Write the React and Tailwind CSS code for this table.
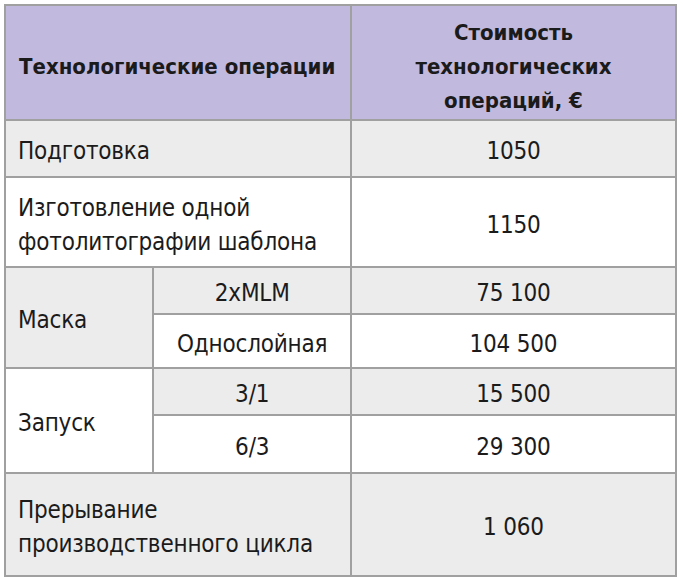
import React from 'react';

const font = { fontFamily: '"Liberation Sans Narrow", "DejaVu Sans Condensed", "Roboto Condensed", "Liberation Sans", sans-serif' };

const cell = 'border-2 border-[#a0a0a0] align-middle pt-[5px]';

const App = () => {
  return (
    <div className="w-[683px] h-[581px] bg-white pt-[4px] pl-[4px]" style={font}>
      <table className="border-collapse w-[673px] text-[#1b1b1b] text-[24px] leading-[34px] tracking-[-0.2px]">
        <colgroup>
          <col className="w-[149px]" />
          <col className="w-[198px]" />
          <col className="w-[326px]" />
        </colgroup>
        <thead>
          <tr className="h-[115px] bg-[#c1b9de] font-bold text-[22px] tracking-normal">
            <th colSpan={2} className={`${cell} text-left pl-[13px] pt-[9px]`}>Технологические операции</th>
            <th className={`${cell} text-center px-4 pt-[9px]`}>
              Стоимость<br />технологических<br />операций, €
            </th>
          </tr>
        </thead>
        <tbody>
          <tr className="h-[57px] bg-[#ececec]">
            <td colSpan={2} className={`${cell} pl-[12px]`}>Подготовка</td>
            <td className={`${cell} text-center`}>1050</td>
          </tr>
          <tr className="h-[90px] bg-white">
            <td colSpan={2} className={`${cell} pl-[12px]`}>
              Изготовление одной<br />фотолитографии шаблона
            </td>
            <td className={`${cell} text-center`}>1150</td>
          </tr>
          <tr className="h-[47px] bg-[#ececec]">
            <td rowSpan={2} className={`${cell} pl-[12px] bg-[#ececec]`}>Маска</td>
            <td className={`${cell} text-center`}>2xMLM</td>
            <td className={`${cell} text-center`}>75 100</td>
          </tr>
          <tr className="h-[54px] bg-white">
            <td className={`${cell} text-center`}>Однослойная</td>
            <td className={`${cell} text-center`}>104 500</td>
          </tr>
          <tr className="h-[47px] bg-[#ececec]">
            <td rowSpan={2} className={`${cell} pl-[12px] bg-white`}>Запуск</td>
            <td className={`${cell} text-center`}>3/1</td>
            <td className={`${cell} text-center`}>15 500</td>
          </tr>
          <tr className="h-[58px] bg-white">
            <td className={`${cell} text-center`}>6/3</td>
            <td className={`${cell} text-center`}>29 300</td>
          </tr>
          <tr className="h-[103px] bg-[#ececec]">
            <td colSpan={2} className={`${cell} pl-[12px]`}>
              Прерывание<br />производственного цикла
            </td>
            <td className={`${cell} text-center`}>1 060</td>
          </tr>
        </tbody>
      </table>
    </div>
  );
};

export default App;
